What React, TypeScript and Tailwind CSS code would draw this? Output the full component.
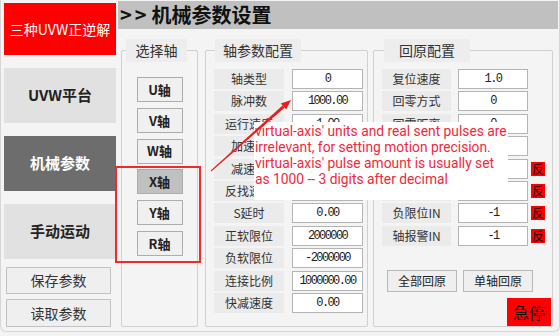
import React from 'react';

const axisRows: [string, string][] = [
    ['轴类型', '0'],
    ['脉冲数', '1000.00'],
    ['运行速度', '1.00'],
    ['加速度', '10.00'],
    ['减速度', '10.00'],
    ['反找速度', '0.50'],
    ['S延时', '0.00'],
    ['正软限位', '2000000'],
    ['负软限位', '-2000000'],
    ['连接比例', '1000000.00'],
    ['快减速度', '0.00'],
];

const homeRows: { label: string; value: string; inv?: boolean }[] = [
    { label: '复位速度', value: '1.0' },
    { label: '回零方式', value: '0' },
    { label: '回零距离', value: '0' },
    { label: '爬行速度', value: '0.50' },
    { label: '原点IN', value: '-1', inv: true },
    { label: '正限位IN', value: '-1', inv: true },
    { label: '负限位IN', value: '-1', inv: true },
    { label: '轴报警IN', value: '-1', inv: true },
];

const axes = ['U轴', 'V轴', 'W轴', 'X轴', 'Y轴', 'R轴'];

const ValueBox = ({ value, w }: { value: string; w: string }) => (
    <div className={`${w} h-[20px] bg-white border border-[#b4b4b4] flex items-center justify-center font-['Liberation_Mono',monospace] text-[12px] tracking-[-1.6px] text-[#222]`}>
        {value}
    </div>
);

// group title sits over the top border
const GroupTitle = ({ text, left, w }: { text: string; left: string; w: string }) => (
    <div className={`absolute top-[-12px] ${left} ${w} h-[23px] bg-[#ededed] text-[14px] leading-[23px] text-center text-[#333]`}>
        {text}
    </div>
);

export default function App() {
    return (
        <div className="relative w-[560px] h-[336px] overflow-hidden bg-[#f4f4f4] font-['Noto_Sans_CJK_SC','Noto_Sans',sans-serif] text-[#222]">
            <div className="flex h-[332px] border-x border-b border-[#d6d6d6] rounded-b-[6px]">
                {/* left nav */}
                <div className="w-[117px] pl-[3px] pt-[3px] flex flex-col">
                    <div className="w-[112px] h-[52px] bg-[#ff0000] text-white text-[14px] flex items-center justify-center">
                        三种UVW正逆解
                    </div>
                    <div className="mt-[13px] w-[112px] h-[55px] bg-[#e1e1e1] flex items-center justify-center font-bold text-[15px]">
                        UVW平台
                    </div>
                    <div className="mt-[13px] w-[112px] h-[55px] bg-[#6d6d6d] text-white flex items-center justify-center font-bold text-[15px]">
                        机械参数
                    </div>
                    <div className="mt-[13px] w-[112px] h-[55px] bg-[#e1e1e1] flex items-center justify-center font-bold text-[15px]">
                        手动运动
                    </div>
                    <button className="mt-[8px] ml-[2px] w-[105px] h-[27px] bg-[#efefef] border border-[#c2c2c2] text-[14px] text-[#333]">
                        保存参数
                    </button>
                    <button className="mt-[5px] ml-[2px] w-[105px] h-[28px] bg-[#efefef] border border-[#c2c2c2] text-[14px] text-[#333]">
                        读取参数
                    </button>
                </div>

                {/* right side */}
                <div className="flex-1 flex flex-col">
                    <div className="mt-[1px] mr-[1px] h-[28px] bg-[#c0c0c0] pl-[2px] flex items-center text-[20px] font-bold text-[#111]">
                        <span className="tracking-[3px] mr-[2px]">&gt;&gt;</span>机械参数设置
                    </div>
                    <div className="mt-[21px] ml-[3px] flex">
                        <div className="relative w-[77px] h-[277px] border border-[#d0d0d0] rounded-[2px] flex flex-col items-center">
                            <GroupTitle text="选择轴" left="left-[4px]" w="w-[61px]" />
                            <div className="pt-[26px] flex flex-col gap-[5.8px]">
                                {axes.map((a) => (
                                    <div
                                        key={a}
                                        className={`w-[46px] h-[25px] border border-[#adadad] flex items-center justify-center text-[13px] font-bold ${a === 'X轴' ? 'bg-[#c0c0c0]' : 'bg-[#f0f0f0]'}`}
                                    >
                                        {a}
                                    </div>
                                ))}
                            </div>
                        </div>

                        <div className="relative ml-[7px] w-[163px] h-[277px] border border-[#d0d0d0] rounded-[2px]">
                            <GroupTitle text="轴参数配置" left="left-[9px]" w="w-[86px]" />
                            <div className="pt-[18px] pl-[8px] flex flex-col gap-[2.4px]">
                                {axisRows.map(([l, v]) => (
                                    <div key={l} className="flex items-center gap-[8px]">
                                        <div className="w-[70px] h-[20px] bg-[#ebebeb] flex items-center justify-center text-[12px] text-[#333]">{l}</div>
                                        <ValueBox value={v} w="w-[71px]" />
                                    </div>
                                ))}
                            </div>
                        </div>

                        <div className="relative ml-[5px] w-[180px] h-[277px] border border-[#d0d0d0] rounded-[2px] flex flex-col">
                            <GroupTitle text="回原配置" left="left-[10px]" w="w-[86px]" />
                            <div className="pt-[18px] pl-[8px] flex flex-col gap-[2.4px]">
                                {homeRows.map((r) => (
                                    <div key={r.label} className="flex items-center">
                                        <div className="w-[69px] h-[20px] bg-[#ebebeb] flex items-center justify-center text-[12px] text-[#333]">{r.label}</div>
                                        <div className="ml-[7px]">
                                            <ValueBox value={r.value} w="w-[70px]" />
                                        </div>
                                        {r.inv && (
                                            <div className="ml-[3px] w-[14px] h-[14px] bg-[#ff0000] flex items-center justify-center text-[12px] leading-none text-[#111]">反</div>
                                        )}
                                    </div>
                                ))}
                            </div>
                            <div className="mt-[24px] ml-[13px] flex gap-[6px]">
                                <button className="w-[70px] h-[22px] bg-[#efefef] border border-[#b8b8b8] text-[12px] text-[#222]">全部回原</button>
                                <button className="w-[70px] h-[22px] bg-[#efefef] border border-[#b8b8b8] text-[12px] text-[#222]">单轴回原</button>
                            </div>
                            <div className="mt-[6px] self-end mr-[1px] w-[44px] h-[28px] bg-[#ff0000] flex items-center justify-center text-[16px] text-[#111]">
                                急停
                            </div>
                        </div>
                    </div>
                </div>
            </div>

            {/* annotation overlay */}
            <div className="absolute left-[115px] top-[166px] w-[86px] h-[97px] border-2 border-[#ee2a2a]" />
            <div className="absolute left-[254px] top-[122px] w-[254px] h-[78px] bg-white pl-[1px] pt-[1px] font-['Roboto','Liberation_Sans',sans-serif] text-[13.8px] leading-[16px] text-[#f0283c] whitespace-nowrap">
                <div>virtual-axis' units and real sent pulses are</div>
                <div>irrelevant, for setting motion precision.</div>
                <div>virtual-axis' pulse amount is usually set</div>
                <div>as 1000 -- 3 digits after decimal</div>
            </div>
            <svg className="absolute left-0 top-0 pointer-events-none" width="560" height="336">
                <polygon points="211.3,171.4 210.7,170.6 282.5,105.5 284.5,107.7" fill="#e81e1e" />
                <polygon points="291,100 286.2,109.6 280.8,103.6" fill="#e81e1e" />
            </svg>
        </div>
    );
}
